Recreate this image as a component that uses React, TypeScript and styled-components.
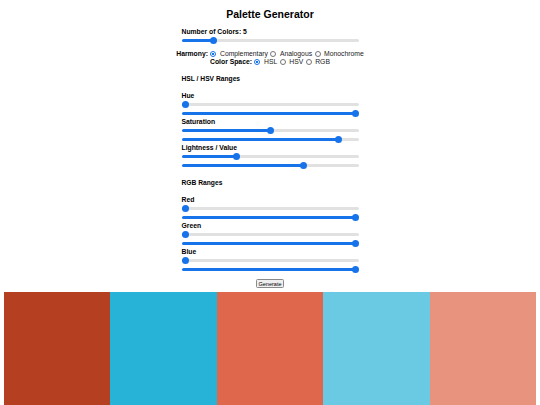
import { useState } from "react";
import styled, { createGlobalStyle } from "styled-components";

const GlobalStyle = createGlobalStyle`
  body {
    margin: 4px;
    background: #fff;
    color: #000;
    font-family: "Liberation Sans", Arial, sans-serif;
  }
`;

type Range2 = [number, number];

const START_PALETTE = ["#b43f21", "#27b3d8", "#df674b", "#6acae3", "#e7937d"];

const rand = (a: number, b: number) => a + Math.random() * (b - a);

const hslToHex = (h: number, s: number, l: number) => {
  s /= 100;
  l /= 100;
  const k = (n: number) => (n + h / 30) % 12;
  const a = s * Math.min(l, 1 - l);
  const f = (n: number) => l - a * Math.max(-1, Math.min(k(n) - 3, Math.min(9 - k(n), 1)));
  const hex = (x: number) => Math.round(x * 255).toString(16).padStart(2, "0");
  return `#${hex(f(0))}${hex(f(8))}${hex(f(4))}`;
};

const App = () => {
  const [count, setCount] = useState(5);
  const [harmony, setHarmony] = useState("complementary");
  const [space, setSpace] = useState("hsl");
  const [hue, setHue] = useState<Range2>([0, 360]);
  const [sat, setSat] = useState<Range2>([50, 90]);
  const [light, setLight] = useState<Range2>([30, 70]);
  const [red, setRed] = useState<Range2>([0, 255]);
  const [green, setGreen] = useState<Range2>([0, 255]);
  const [blue, setBlue] = useState<Range2>([0, 255]);
  const [palette, setPalette] = useState<string[]>(START_PALETTE);

  const generate = () => {
    const out: string[] = [];
    if (space === "rgb") {
      for (let i = 0; i < count; i++) {
        const c = [rand(...red), rand(...green), rand(...blue)].map((v) =>
          Math.round(v).toString(16).padStart(2, "0")
        );
        out.push(`#${c.join("")}`);
      }
    } else {
      const base = rand(...hue);
      for (let i = 0; i < count; i++) {
        let h = base;
        if (harmony === "complementary") h = base + (i % 2) * 180;
        if (harmony === "analogous") h = base + i * 25;
        out.push(hslToHex(((h % 360) + 360) % 360, rand(...sat), rand(...light)));
      }
    }
    setPalette(out);
  };

  const rangeGroup = (
    name: string,
    value: Range2,
    set: (v: Range2) => void,
    max: number
  ) => (
    <>
      <FieldLabel>{name}</FieldLabel>
      <Slider
        min={0}
        max={max}
        value={value[0]}
        $pct={value[0] / max}
        onChange={(e) => set([Number(e.target.value), value[1]])}
      />
      <Slider
        min={0}
        max={max}
        value={value[1]}
        $pct={value[1] / max}
        onChange={(e) => set([value[0], Number(e.target.value)])}
      />
    </>
  );

  return (
    <>
      <GlobalStyle />
      <Title>Palette Generator</Title>
      <Controls>
        <FieldLabel>Number of Colors: {count}</FieldLabel>
        <Slider
          min={2}
          max={20}
          value={count}
          $pct={(count - 2) / 18}
          onChange={(e) => setCount(Number(e.target.value))}
        />
      </Controls>

      <RadioRow $top={5}>
        <GroupName>Harmony:</GroupName>
        {[
          ["complementary", "Complementary"],
          ["analogous", "Analogous"],
          ["monochrome", "Monochrome"],
        ].map(([v, t]) => (
          <Option key={v}>
            <Radio name="harmony" checked={harmony === v} onChange={() => setHarmony(v)} />
            {t}
          </Option>
        ))}
      </RadioRow>
      <RadioRow $top={0}>
        <GroupName>Color Space:</GroupName>
        {[
          ["hsl", "HSL"],
          ["hsv", "HSV"],
          ["rgb", "RGB"],
        ].map(([v, t]) => (
          <Option key={v}>
            <Radio name="space" checked={space === v} onChange={() => setSpace(v)} />
            {t}
          </Option>
        ))}
      </RadioRow>

      <Controls>
        <SectionTitle>HSL / HSV Ranges</SectionTitle>
        {rangeGroup("Hue", hue, setHue, 360)}
        {rangeGroup("Saturation", sat, setSat, 100)}
        {rangeGroup("Lightness / Value", light, setLight, 100)}

        <SectionTitle>RGB Ranges</SectionTitle>
        {rangeGroup("Red", red, setRed, 255)}
        {rangeGroup("Green", green, setGreen, 255)}
        {rangeGroup("Blue", blue, setBlue, 255)}
      </Controls>

      <ButtonRow>
        <GenerateButton onClick={generate}>Generate</GenerateButton>
      </ButtonRow>

      <Swatches>
        {palette.map((c, i) => (
          <Swatch key={i} $color={c} title={c} />
        ))}
      </Swatches>
    </>
  );
};
export default App;

const Title = styled.h1`
  margin: 4px 0 0;
  font-size: 10.5px;
  line-height: 12px;
  font-weight: bold;
  text-align: center;
`;

const Controls = styled.div`
  width: 177px;
  margin: 0 auto;
  display: flex;
  flex-direction: column;
`;

const FieldLabel = styled.div`
  margin-top: 0;
  font-size: 6.8px;
  line-height: 8px;
  font-weight: bold;
  &:first-child {
    margin-top: 8px;
  }
`;

const SectionTitle = styled.div`
  margin: 9px 0 9px;
  font-size: 6.7px;
  line-height: 8px;
  font-weight: bold;
`;

const Slider = styled.input.attrs({ type: "range" })<{ $pct: number }>`
  -webkit-appearance: none;
  appearance: none;
  display: block;
  width: 100%;
  height: 9px;
  margin: 0;
  padding: 0;
  background: transparent;
  cursor: pointer;

  &::-webkit-slider-runnable-track {
    height: 2.5px;
    border-radius: 2px;
    background: linear-gradient(
      to right,
      #1673ea 0,
      #1673ea calc(3.5px + (100% - 7px) * ${(p) => p.$pct}),
      #e1e1e1 calc(3.5px + (100% - 7px) * ${(p) => p.$pct})
    );
  }

  &::-webkit-slider-thumb {
    -webkit-appearance: none;
    width: 7px;
    height: 7px;
    margin-top: -2.25px;
    border: none;
    border-radius: 50%;
    background: #1673ea;
  }
`;

const RadioRow = styled.div<{ $top: number }>`
  margin-top: ${(p) => p.$top}px;
  display: flex;
  justify-content: center;
  align-items: center;
  font-size: 6.8px;
  line-height: 8px;
`;

const GroupName = styled.span`
  font-weight: bold;
`;

const Option = styled.label`
  display: inline-flex;
  align-items: center;
  color: #222;
`;

const Radio = styled.input.attrs({ type: "radio" })`
  -webkit-appearance: none;
  appearance: none;
  box-sizing: border-box;
  width: 6px;
  height: 6px;
  margin: 0 3.5px 0 2.5px;
  border: 0.6px solid #767676;
  border-radius: 50%;
  background: #fff;

  &:checked {
    border: 0.8px solid #1673ea;
    background: radial-gradient(circle, #1673ea 0 45%, #fff 55%);
  }
`;

const ButtonRow = styled.div`
  margin-top: 5px;
  display: flex;
  justify-content: center;
`;

const GenerateButton = styled.button`
  height: 9px;
  padding: 0 2px;
  font-family: "Liberation Sans", Arial, sans-serif;
  font-size: 5.5px;
  line-height: 8px;
  color: #000;
  background: #efefef;
  border: 0.5px solid #8a8a8a;
  border-radius: 1.5px;
`;

const Swatches = styled.div`
  margin-top: 4px;
  display: flex;
`;

const Swatch = styled.div<{ $color: string }>`
  flex: 1;
  height: 150px;
  background: ${(p) => p.$color};
`;
